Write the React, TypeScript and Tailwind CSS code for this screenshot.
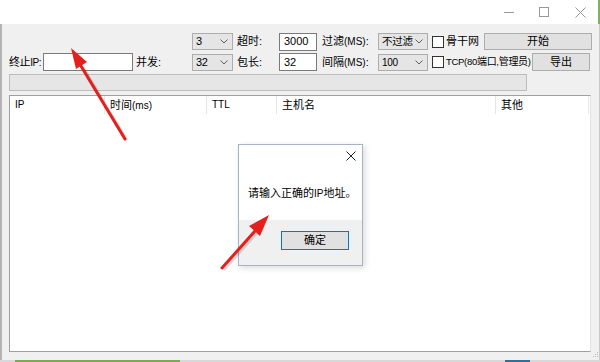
import React from 'react';

const font = { fontFamily: '"Liberation Sans", "Noto Sans CJK SC", sans-serif' };

function Chevron() {
  return (
    <svg width="8" height="5" viewBox="0 0 8 5" className="shrink-0">
      <path d="M0.5 0.5 L4 4 L7.5 0.5" fill="none" stroke="#606060" strokeWidth="1" />
    </svg>
  );
}

function Combo({ value, w, h }: { value: React.ReactNode; w: string; h: string }) {
  return (
    <div className={`${w} ${h} flex items-center justify-between border border-[#adadad] bg-[#e5e5e5] pl-[3px] pr-[4px] text-[11px] text-black shrink-0`}>
      <span className="leading-none whitespace-nowrap tracking-[-0.3px]">{value}</span>
      <Chevron />
    </div>
  );
}

function Input({ value, w, h }: { value?: string; w: string; h: string }) {
  return (
    <div className={`${w} ${h} flex items-center border border-[#7a7a7a] bg-white pl-[4px] text-[11px] text-black shrink-0`}>
      <span className="leading-none">{value}</span>
    </div>
  );
}

function Label({ children, w, ml }: { children: React.ReactNode; w: string; ml: string }) {
  return (
    <div className={`${w} ${ml} text-[11px] text-black leading-none whitespace-nowrap shrink-0`}>{children}</div>
  );
}

function Check({ children, w, size }: { children: React.ReactNode; w: string; size: string }) {
  return (
    <div className={`${w} pl-[4px] flex items-center gap-[2px] shrink-0`}>
      <div className="w-[12px] h-[12px] border border-[#333] bg-white shrink-0" />
      <span className={`${size} leading-none text-black whitespace-nowrap`}>{children}</span>
    </div>
  );
}

const sm = 'text-[10px]';

export default function App() {
  const columns = [
    { name: <span className={sm}>IP</span>, w: 'w-[95px]' },
    { name: <span>时间<span className={sm}>(ms)</span></span>, w: 'w-[102px]' },
    { name: <span className={sm}>TTL</span>, w: 'w-[70px]' },
    { name: '主机名', w: 'w-[219px]' },
    { name: '其他', w: 'w-[93px]' },
  ];

  return (
    <div className="relative w-[600px] h-[362px] overflow-hidden bg-white flex flex-col" style={font}>
      {/* title bar */}
      <div className="h-[24px] flex items-center justify-end bg-white shrink-0">
        <div className="w-[35px] flex justify-center">
          <div className="w-[10px] h-px bg-[#999]" />
        </div>
        <div className="w-[36px] flex justify-center">
          <div className="w-[10px] h-[10px] border border-[#999]" />
        </div>
        <div className="w-[36px] flex justify-center">
          <svg width="11" height="11" viewBox="0 0 11 11">
            <path d="M0.5 0.5 L10.5 10.5 M10.5 0.5 L0.5 10.5" stroke="#999" strokeWidth="1" />
          </svg>
        </div>
        <div className="w-[2px] h-full bg-[#7fb15a]" />
      </div>

      {/* body */}
      <div className="flex-1 bg-[#f0f0f0] border-l-2 border-[#b4b4b4] border-r border-r-[#c8c8c8] flex flex-col pl-[7px] pt-[9px] pb-[8px]">
        {/* row 1 */}
        <div className="h-[17px] flex items-center">
          <div className="ml-[183px]" />
          <Combo value="3" w="w-[41px]" h="h-[17px]" />
          <Label w="w-[42px]" ml="ml-[4px]">超时:</Label>
          <Input value="3000" w="w-[38px]" h="h-[18px]" />
          <Label w="w-[56px]" ml="ml-[5px]">过滤<span className={sm}>(MS)</span>:</Label>
          <Combo value={<span className="text-[10.5px]">不过滤</span>} w="w-[50px]" h="h-[17px]" />
          <Check w="w-[56px]" size="text-[11px]">骨干网</Check>
          <div className="w-[108px] h-[17px] border border-[#adadad] bg-[#e1e1e1] flex items-center justify-center text-[11px] leading-none">
            开始
          </div>
        </div>

        {/* row 2 */}
        <div className="mt-[3px] h-[18px] flex items-center">
          <div className="w-[34px] text-[11px] text-black leading-none whitespace-nowrap shrink-0 tracking-[-0.4px]">
            终止<span className={sm}>IP:</span>
          </div>
          <Input w="w-[90px]" h="h-[18px]" />
          <Label w="w-[56px]" ml="ml-[3px]">并发:</Label>
          <Combo value="32" w="w-[41px]" h="h-[17px]" />
          <Label w="w-[42px]" ml="ml-[4px]">包长:</Label>
          <Input value="32" w="w-[38px]" h="h-[18px]" />
          <Label w="w-[56px]" ml="ml-[5px]">间隔<span className={sm}>(MS)</span>:</Label>
          <Combo value={<span className={sm}>100</span>} w="w-[50px]" h="h-[17px]" />
          <Check w="w-[100px]" size="text-[10px] tracking-[-0.3px]">
            <span className="text-[9.5px]">TCP(80</span>端口<span className="text-[9.5px]">,</span>管理员<span className="text-[9.5px]">)</span>
          </Check>
          <div className="ml-[4px] w-[58px] h-[18px] border border-[#adadad] bg-[#e1e1e1] flex items-center justify-center text-[11px] leading-none">
            导出
          </div>
        </div>

        {/* progress */}
        <div className="mt-[3px] w-[518px] h-[17px] border border-[#bcbcbc] bg-[#e6e6e6]" />

        {/* list */}
        <div className="mt-[4px] flex-1 w-[582px] bg-white border border-[#a0a0a0] border-r-[#e3e3e3] border-b-[#a0a0a0]">
          <div className="h-[18px] flex items-stretch">
            {columns.map((c, i) => (
              <div key={i} className={`${c.w} border-r border-[#e5e5e5] flex items-center pl-[5px] text-[11px] leading-none text-black`}>
                {c.name}
              </div>
            ))}
          </div>
        </div>
      </div>

      {/* desktop strip */}
      <div className="h-[2px] flex shrink-0 bg-[#d8d8d8]">
        <div className="ml-[15px] w-[165px] bg-[#79ac4f]" />
        <div className="ml-[325px] w-[25px] bg-[#2f6f9a]" />
      </div>

      {/* size grip */}
      <svg className="absolute left-[592px] top-[351px]" width="7" height="7" viewBox="0 0 7 7">
        <rect x="5" y="1" width="1" height="1" fill="#bbb" />
        <rect x="3" y="3" width="1" height="1" fill="#bbb" />
        <rect x="5" y="3" width="1" height="1" fill="#bbb" />
        <rect x="1" y="5" width="1" height="1" fill="#bbb" />
        <rect x="3" y="5" width="1" height="1" fill="#bbb" />
        <rect x="5" y="5" width="1" height="1" fill="#bbb" />
      </svg>

      {/* message box */}
      <div className="absolute left-[238px] top-[144px] w-[125px] h-[122px] border border-[#a6b4c6] bg-white flex flex-col shadow-[2px_2px_6px_rgba(0,0,0,0.15)]">
        <div className="h-[22px] flex justify-end items-center pr-[6px]">
          <svg width="10" height="10" viewBox="0 0 10 10">
            <path d="M0.5 0.5 L9.5 9.5 M9.5 0.5 L0.5 9.5" stroke="#222" strokeWidth="1" />
          </svg>
        </div>
        <div className="h-[53px] flex items-center pl-[9px] text-[11px] leading-none text-black">
          <span className="whitespace-nowrap">
            请输入正确的<span className={sm}>IP</span>地址。
          </span>
        </div>
        <div className="flex-1 bg-[#f0f0f0] flex justify-end items-start pt-[11px] pr-[13px]">
          <div className="w-[68px] h-[19px] border border-[#0078d7] bg-[#e1e1e1] flex items-center justify-center text-[11px] leading-none">
            确定
          </div>
        </div>
      </div>

      {/* red arrows */}
      <svg className="absolute left-0 top-0 pointer-events-none" width="600" height="362" viewBox="0 0 600 362">
        <line x1="125" y1="139" x2="81" y2="66" stroke="rgba(0,0,0,0.15)" strokeWidth="4" transform="translate(1.5,1.5)" />
        <line x1="125" y1="139" x2="81" y2="66" stroke="#e3201c" strokeWidth="3" strokeLinecap="round" />
        <polygon points="71,48 87,62 76,69" fill="#e3201c" />
        <line x1="222" y1="268" x2="255" y2="231" stroke="rgba(0,0,0,0.15)" strokeWidth="4" transform="translate(1.5,1.5)" />
        <line x1="222" y1="268" x2="255" y2="231" stroke="#e3201c" strokeWidth="3" strokeLinecap="round" />
        <polygon points="269,215 260,236 249,226" fill="#e3201c" />
      </svg>
    </div>
  );
}
